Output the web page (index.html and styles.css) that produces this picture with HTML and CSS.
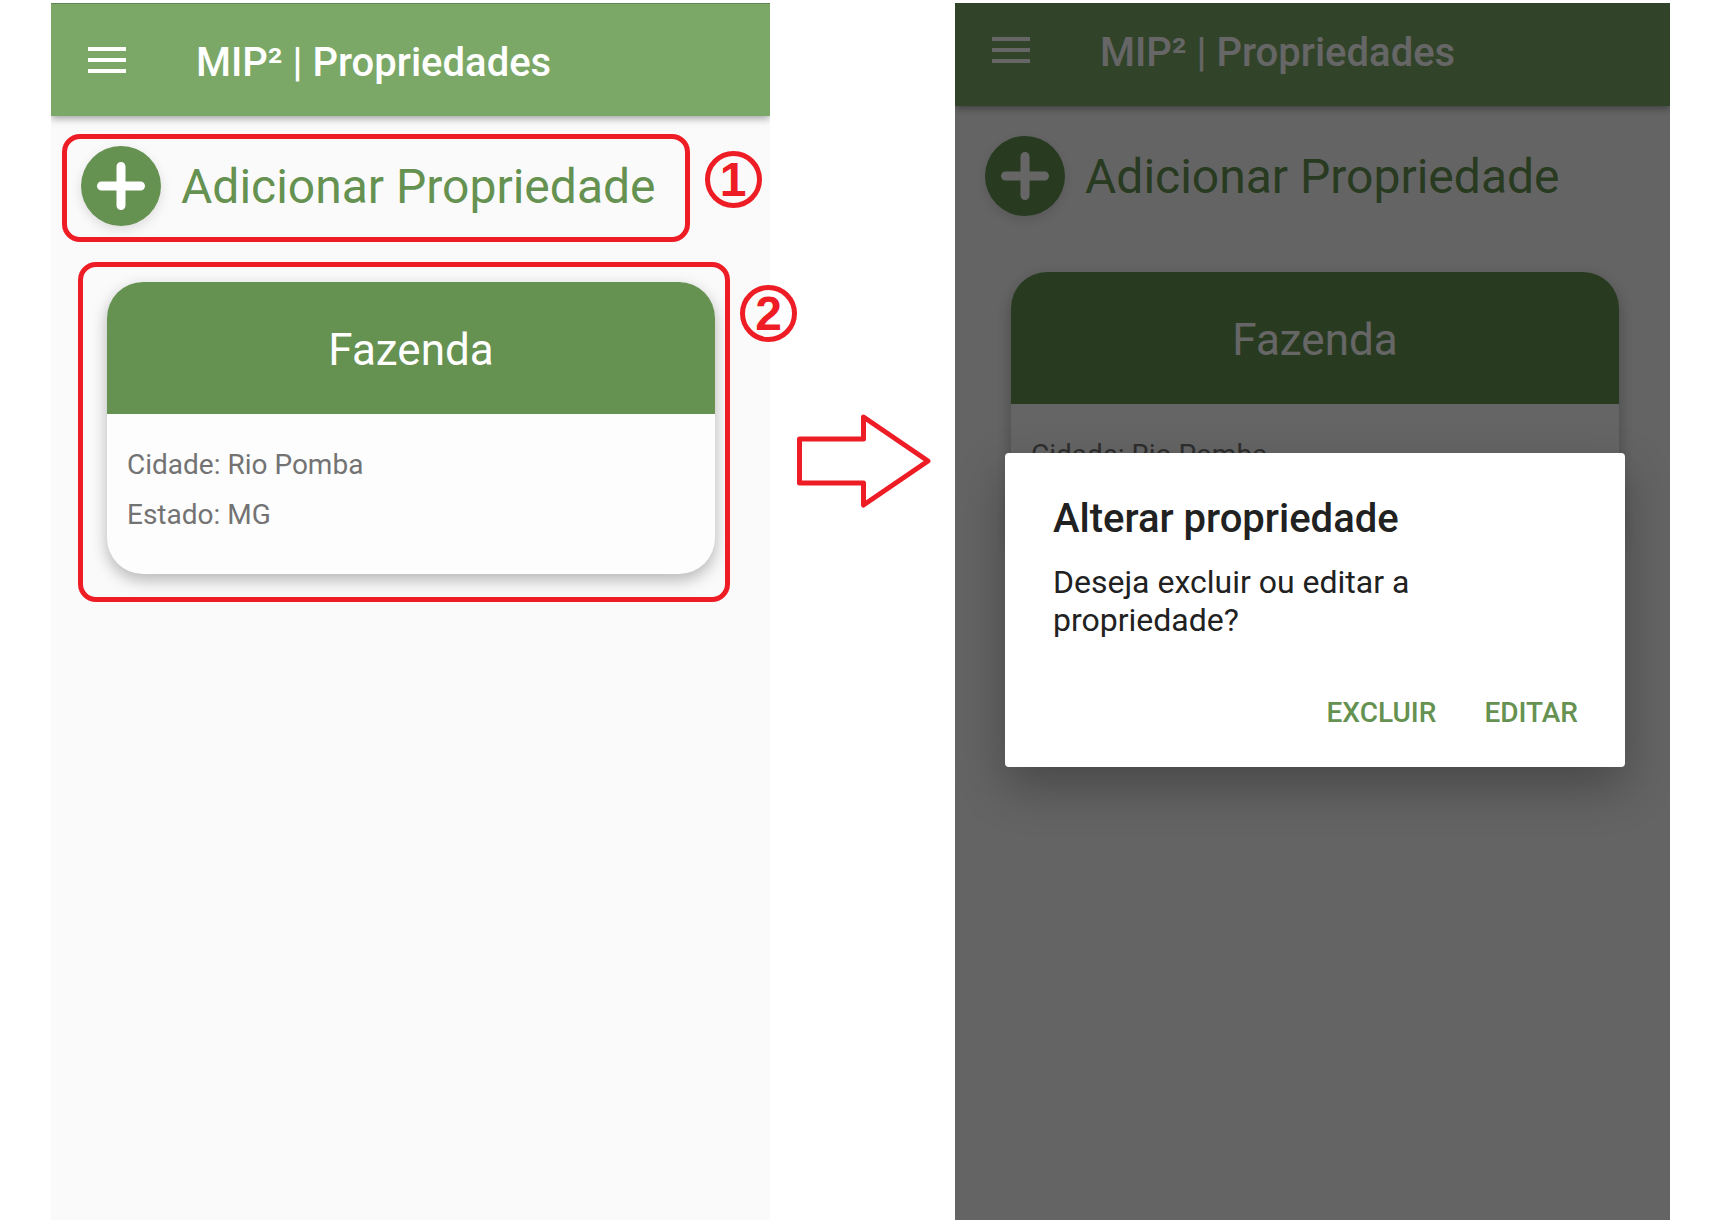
FILE: index.html
```html
<!DOCTYPE html>
<html lang="pt-BR">
<head>
  <meta charset="utf-8">
  <meta name="viewport" content="width=device-width, initial-scale=1">
  <title>MIP² | Propriedades</title>
  <link rel="stylesheet" href="styles.css">
</head>
<body>
  <main class="steps">
    <section class="screen">
      <header class="toolbar toolbar--edge">
        <button class="menu-button" type="button" aria-label="Menu">
          <svg width="38" height="26" viewBox="0 0 38 26" aria-hidden="true"><path d="M0 0h38v4H0zM0 11h38v4H0zM0 22h38v4H0z" fill="currentColor"/></svg>
        </button>
        <h1 class="toolbar-title">MIP² | Propriedades</h1>
      </header>
      <div class="content">
        <div class="add-row">
          <button class="add-button" type="button">
            <span class="fab"><svg width="48" height="48" viewBox="0 0 48 48" aria-hidden="true"><path d="M24 4.500v39M4.500 24h39" stroke="currentColor" stroke-width="9" stroke-linecap="round"/></svg></span>
            <span class="add-label">Adicionar Propriedade</span>
          </button>
          <div class="callout callout--add"><span class="callout-number">1</span></div>
        </div>
        <div class="card-slot">
          <article class="card">
            <h2 class="card-title">Fazenda</h2>
            <div class="card-body">
              <p>Cidade: Rio Pomba</p>
              <p>Estado: MG</p>
            </div>
          </article>
          <div class="callout callout--card"><span class="callout-number">2</span></div>
        </div>
      </div>
    </section>

    <svg class="arrow" width="134" height="94" viewBox="0 0 134 94" aria-hidden="true"><path d="M2.500 25h64V3L131 47 66.500 91V69h-64z" fill="none" stroke="currentColor" stroke-width="5" stroke-linejoin="round"/></svg>

    <section class="screen screen--dimmed">
      <header class="toolbar toolbar--short">
        <button class="menu-button" type="button" aria-label="Menu">
          <svg width="38" height="26" viewBox="0 0 38 26" aria-hidden="true"><path d="M0 0h38v4H0zM0 11h38v4H0zM0 22h38v4H0z" fill="currentColor"/></svg>
        </button>
        <h1 class="toolbar-title">MIP² | Propriedades</h1>
      </header>
      <div class="content">
        <div class="add-row">
          <button class="add-button" type="button">
            <span class="fab"><svg width="48" height="48" viewBox="0 0 48 48" aria-hidden="true"><path d="M24 4.500v39M4.500 24h39" stroke="currentColor" stroke-width="9" stroke-linecap="round"/></svg></span>
            <span class="add-label">Adicionar Propriedade</span>
          </button>
        </div>
        <div class="card-slot">
          <article class="card">
            <h2 class="card-title">Fazenda</h2>
            <div class="card-body">
              <p>Cidade: Rio Pomba</p>
              <p>Estado: MG</p>
            </div>
          </article>
        </div>
      </div>
      <div class="scrim">
        <div class="dialog" role="dialog" aria-labelledby="dialog-title">
          <h2 class="dialog-title" id="dialog-title">Alterar propriedade</h2>
          <p class="dialog-text">Deseja excluir ou editar a propriedade?</p>
          <div class="dialog-actions">
            <button class="text-button" type="button">EXCLUIR</button>
            <button class="text-button" type="button">EDITAR</button>
          </div>
        </div>
      </div>
    </section>
  </main>
</body>
</html>
```

FILE: styles.css
```css
:root {
  --green: #659151;
  --green-light: #7ba867;
  --red: #ee1c24;
}

* {
  box-sizing: border-box;
}

body {
  margin: 0;
  background: #fff;
  font-family: Roboto, "Noto Sans", sans-serif;
}

h1,
h2,
p {
  margin: 0;
}

button {
  padding: 0;
  border: 0;
  background: none;
  font-family: inherit;
  cursor: pointer;
}

svg {
  display: block;
}

.steps {
  display: grid;
  grid-template-columns: 719fr 185px 715fr;
  min-height: 100vh;
  padding: 3px 46px 0 51px;
}

.screen {
  position: relative;
  background: #fafafa;
}

.screen--dimmed {
  overflow: hidden;
}

/* Toolbar */
.toolbar {
  display: flex;
  align-items: center;
  gap: 70px;
  height: 113px;
  padding: 0 37px;
  background: var(--green-light);
  box-shadow: 0 2px 8px rgba(0, 0, 0, 0.4);
  clip-path: inset(0 0 -16px 0);
  color: #fff;
}

.toolbar--edge {
  box-shadow: inset 0 1px #5f8550, 0 2px 8px rgba(0, 0, 0, 0.4);
}

.toolbar--short {
  height: 103px;
  padding-bottom: 10px;
}

.menu-button {
  color: inherit;
}

.toolbar-title {
  padding-top: 6px;
  font-size: 40px;
  font-weight: 500;
  line-height: 48px;
  white-space: nowrap;
}

/* Property list */
.content {
  display: grid;
  gap: 56px;
  padding: 30px 55px 48px 30px;
}

.screen--dimmed .content {
  padding-right: 51px;
}

.add-row,
.card-slot {
  position: relative;
}

.add-row {
  justify-self: start;
}

.add-button {
  display: flex;
  align-items: center;
  gap: 20px;
  color: var(--green);
  font-size: 48px;
  line-height: 56px;
  white-space: nowrap;
}

.add-label {
  padding-top: 2px;
}

.fab {
  display: grid;
  place-items: center;
  width: 80px;
  height: 80px;
  border-radius: 50%;
  background: var(--green);
  box-shadow: 0 4px 12px rgba(0, 0, 0, 0.12);
  color: #fff;
}

.card-slot {
  margin-left: 26px;
}

.card {
  overflow: hidden;
  border-radius: 36px;
  background: #fdfdfd;
  box-shadow: 0 6px 16px rgba(0, 0, 0, 0.28);
}

.card-title {
  padding: 42px 20px 38px;
  background: var(--green);
  color: #fff;
  font-size: 44px;
  font-weight: 400;
  line-height: 52px;
  text-align: center;
}

.card-body {
  padding: 26px 20px 34px;
  color: #737373;
  font-size: 28px;
  line-height: 50px;
}

/* Numbered outlines drawn over the screen */
.callout {
  position: absolute;
  border: 5px solid var(--red);
  border-radius: 18px;
  pointer-events: none;
}

.callout--add {
  inset: -12px -34px -16px -19px;
}

.callout--card {
  inset: -20px -15px -28px -29px;
}

.callout-number {
  position: absolute;
  top: 12px;
  left: calc(100% + 20px);
  display: grid;
  place-items: center;
  width: 57px;
  height: 57px;
  border: 5px solid var(--red);
  border-radius: 50%;
  color: var(--red);
  font: bold 48px/46px "Liberation Sans", Arial, sans-serif;
}

.callout--card .callout-number {
  top: 18px;
  left: calc(100% + 15px);
}

.arrow {
  justify-self: center;
  margin-top: 411px;
  margin-left: 3px;
  color: var(--red);
}

/* Dialog */
.scrim {
  position: absolute;
  inset: 0;
  display: grid;
  align-items: center;
  padding: 0 45px 3px 50px;
  background: rgba(0, 0, 0, 0.6);
}

.dialog {
  padding: 42px 47px 36px 48px;
  border-radius: 4px;
  background: #fff;
  box-shadow: 0 20px 48px rgba(0, 0, 0, 0.28);
  color: #212121;
}

.dialog-title {
  font-size: 40px;
  font-weight: 500;
  line-height: 48px;
}

.dialog-text {
  margin-top: 20px;
  font-size: 32px;
  line-height: 38px;
}

.dialog-actions {
  display: flex;
  justify-content: flex-end;
  gap: 48px;
  margin-top: 56px;
}

.text-button {
  color: var(--green);
  font-size: 28px;
  font-weight: 500;
  line-height: 36px;
}
```
